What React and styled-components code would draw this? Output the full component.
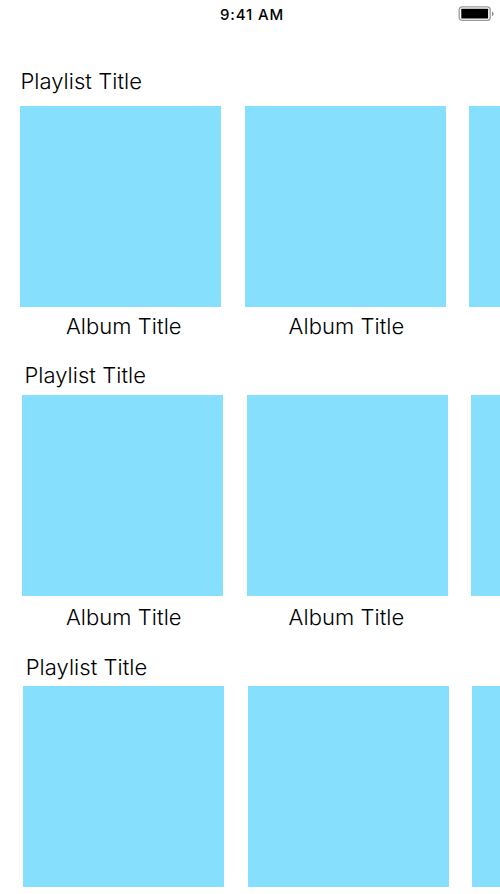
import React from "react";
import styled, { createGlobalStyle } from "styled-components";

const GlobalStyle = createGlobalStyle`
  body { margin: 0; background: #fff; }
`;

const Screen = styled.main`
  height: 894px;
  overflow: hidden;
  display: flex;
  flex-direction: column;
  background: #fff;
  color: #000;
  font-family: Inter, "Liberation Sans", sans-serif;
`;

const StatusBar = styled.header`
  height: 28px;
  display: grid;
  grid-template-columns: 1fr auto 1fr;
  align-items: center;
  padding: 0 5px 0 9px;
  flex: none;
`;

const Time = styled.time`
  grid-column: 2;
  font-size: 15px;
  font-weight: 500;
  letter-spacing: 0.85px;
`;

const Battery = styled.svg`
  justify-self: end;
`;

const TopSpace = styled.div`
  flex: none;
  height: 40px;
`;

const Section = styled.section`
  flex: none;
  height: ${(p) => p.$height}px;
`;

const Heading = styled.h2`
  box-sizing: border-box;
  margin: 0;
  padding: ${(p) => p.$top}px 0 0 ${(p) => p.$inset}px;
  height: ${(p) => p.$height}px;
  font-size: 22px;
  font-weight: 350;
  line-height: 27px;
  letter-spacing: 0.05px;
  white-space: nowrap;
`;

const Shelf = styled.div`
  display: flex;
  gap: 23.6px;
  padding-left: ${(p) => p.$inset}px;
`;

const Cover = styled.div`
  flex: none;
  width: 201px;
  height: 201px;
  background: #86dffc;
`;

const Captions = styled.div`
  display: flex;
  padding: ${(p) => p.$top}px 0 0 66px;
`;

const Caption = styled.span`
  flex: none;
  width: 222.6px;
  font-size: 22px;
  font-weight: 350;
  line-height: 27px;
  letter-spacing: 0.05px;
`;

const playlists = [
  { titleTop: 0, titleInset: 20.4, titleHeight: 38, shelfInset: 20, height: 293, captionTop: 6 },
  { titleTop: 1, titleInset: 24.4, titleHeight: 34.4, shelfInset: 22, height: 292, captionTop: 7.6 },
  { titleTop: 1, titleInset: 25.7, titleHeight: 33, shelfInset: 23, height: 241 },
];

export default function App() {
  return (
    <>
      <GlobalStyle />
      <Screen>
        <StatusBar>
          <Time>9:41 AM</Time>
          <Battery width="37" height="16" viewBox="0 0 37 16">
            <rect x="1.2" y="0.8" width="31" height="13.6" rx="3" fill="none" stroke="#999" strokeWidth="1.3" />
            <rect x="3.3" y="2.8" width="26.8" height="9.6" rx="0.4" />
            <path d="M34 5.4c2 .8 2 3.8 0 4.6z" fill="#888" />
          </Battery>
        </StatusBar>
        <TopSpace />
        {playlists.map((p, i) => (
          <Section key={i} $height={p.height}>
            <Heading $top={p.titleTop} $inset={p.titleInset} $height={p.titleHeight}>
              Playlist Title
            </Heading>
            <Shelf $inset={p.shelfInset}>
              <Cover />
              <Cover />
              <Cover />
            </Shelf>
            {p.captionTop && (
              <Captions $top={p.captionTop}>
                <Caption>Album Title</Caption>
                <Caption>Album Title</Caption>
              </Captions>
            )}
          </Section>
        ))}
      </Screen>
    </>
  );
}
